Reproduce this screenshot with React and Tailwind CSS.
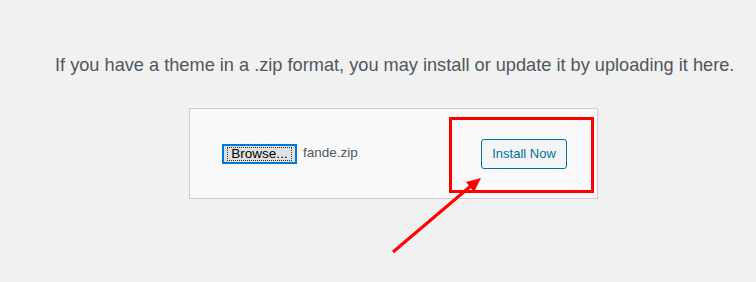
import React from 'react';

function App() {
  return (
    <div className="relative h-[282px] w-[756px] overflow-hidden bg-[#f1f1f1] font-['Liberation_Sans',Arial,sans-serif]">
      <p className="pl-[55px] pt-[55px] text-[18.2px] leading-[20px] text-[#50575e]">
        If you have a theme in a .zip format, you may install or update it by uploading it here.
      </p>

      <div className="ml-[189px] mt-[33px] flex h-[91px] w-[409px] items-center border border-[#ccd0d4] bg-[#f9f9f9] pl-[32px] pr-[30px]">
        <button className="flex h-[20px] w-[75px] items-center justify-center border-2 border-[#0078d7] bg-[#e1e1e1] px-[3px] py-[1px] text-[13.5px] leading-none text-black">
          <span className="flex h-full w-full items-center justify-center border border-dotted border-[#333]">
            Browse...
          </span>
        </button>
        <span className="ml-[6px] text-[13.5px] text-[#50575e]">fande.zip</span>

        <button className="ml-auto h-[30px] w-[86px] rounded-[3px] border border-[#0071a1] bg-[#f3f5f6] text-[13px] text-[#0071a1]">
          Install Now
        </button>
      </div>

      {/* annotation: red highlight box */}
      <div className="pointer-events-none absolute left-[449px] top-[117px] h-[76px] w-[145px] border-[3px] border-[#ff0000]" />

      {/* annotation: arrow */}
      <svg className="pointer-events-none absolute left-0 top-0" width="756" height="282" viewBox="0 0 756 282">
        <line x1="393" y1="252" x2="472" y2="185" stroke="#ff0000" strokeWidth="3" />
        <polygon points="481,178 466,182 474,192" fill="#ff0000" />
      </svg>
    </div>
  );
}

export default App;
